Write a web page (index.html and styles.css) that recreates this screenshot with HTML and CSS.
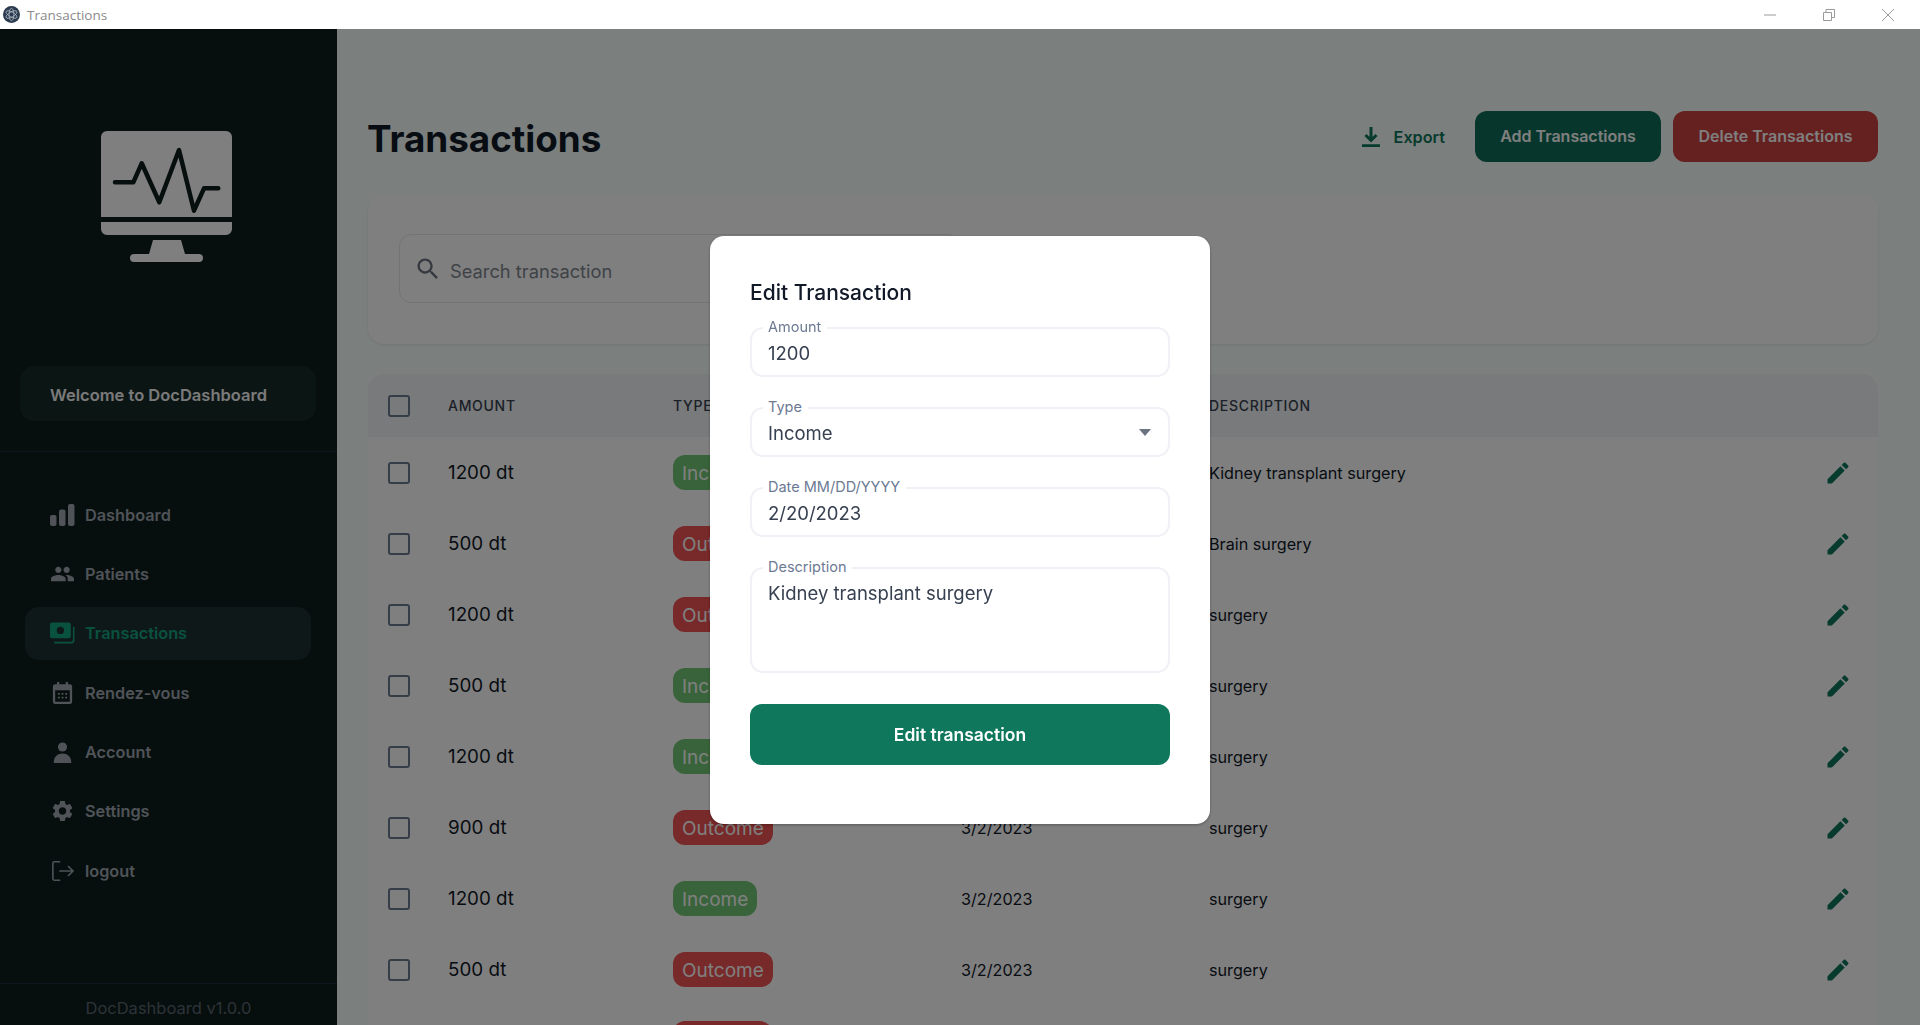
FILE: index.html
```html
<!DOCTYPE html>
<html lang="en">
<head>
  <meta charset="UTF-8">
  <title>Transactions</title>
  <link rel="stylesheet" href="styles.css">
</head>
<body>

<svg class="sprites" width="0" height="0">
  <symbol id="pencil" viewBox="0 0 24 24"><path d="M3 17.25V21h3.75L17.81 9.94l-3.75-3.75L3 17.25zM20.71 7.04c.39-.39.39-1.02 0-1.41l-2.34-2.34c-.39-.39-1.02-.39-1.41 0l-1.83 1.83 3.75 3.75 1.83-1.83z"/></symbol>
</svg>

<div class="titlebar">
  <div class="titlebar-left">
    <svg class="app-icon" viewBox="0 0 18 18">
      <circle cx="9" cy="9" r="9" fill="#2b3a4e"/>
      <g fill="none" stroke="#a9b4c0" stroke-width="0.9">
        <ellipse cx="9" cy="9" rx="6.5" ry="2.6" transform="rotate(30 9 9)"/>
        <ellipse cx="9" cy="9" rx="6.5" ry="2.6" transform="rotate(90 9 9)"/>
        <ellipse cx="9" cy="9" rx="6.5" ry="2.6" transform="rotate(150 9 9)"/>
      </g>
    </svg>
    <span>Transactions</span>
  </div>
  <div class="window-controls">
    <svg viewBox="0 0 12 12"><path d="M0 6h12"/></svg>
    <svg viewBox="0 0 12 12"><path d="M.5 3.5h8v8h-8zM3 3.5V.5h8.500v8h-3"/></svg>
    <svg viewBox="0 0 12 12"><path d="M0 0l12 12M12 0L0 12"/></svg>
  </div>
</div>

<div class="app">
  <aside class="sidebar">
    <div class="logo">
      <svg viewBox="0 0 131 131" width="131" height="131">
        <path fill="#fff" d="M6 0h119a6 6 0 0 1 6 6v80H0V6a6 6 0 0 1 6-6zM0 91h131v7a6 6 0 0 1-6 6H6a6 6 0 0 1-6-6zM52 109h28l4 14h14a3.500 3.500 0 0 1 0 8H33a3.500 3.500 0 0 1 0-8h15z"/>
        <path fill="none" stroke="#0c1e1c" stroke-width="4.500" stroke-linecap="round" stroke-linejoin="round" d="M14 51.300h18.300l8.400-19 17.600 39L78 19l15 60.700 10-22.400h14.300"/>
      </svg>
    </div>
    <div class="welcome">Welcome to DocDashboard</div>
    <nav class="side-nav">
      <a class="nav-item">
        <svg viewBox="0 0 25 22"><rect x="0" y="11" width="6.500" height="11" rx="2"/><rect x="9" y="5.500" width="6.500" height="16.500" rx="2"/><rect x="18" y="0" width="6.500" height="22" rx="2"/></svg>
        Dashboard
      </a>
      <a class="nav-item">
        <svg viewBox="0 0 24 24" class="wide"><path d="M16 11c1.660 0 2.990-1.340 2.990-3S17.660 5 16 5c-1.660 0-3 1.340-3 3s1.340 3 3 3zm-8 0c1.660 0 2.990-1.340 2.990-3S9.660 5 8 5C6.340 5 5 6.340 5 8s1.340 3 3 3zm0 2c-2.330 0-7 1.170-7 3.500V19h14v-2.500c0-2.330-4.670-3.500-7-3.500zm8 0c-.29 0-.62.02-.97.05 1.160.84 1.970 1.970 1.970 3.450V19h6v-2.500c0-2.330-4.670-3.500-7-3.500z"/></svg>
        Patients
      </a>
      <a class="nav-item active">
        <svg viewBox="0 0 24 20"><path fill-rule="evenodd" d="M2 0h16a2 2 0 0 1 2 2v11a2 2 0 0 1-2 2H2a2 2 0 0 1-2-2V2a2 2 0 0 1 2-2zm8 4a3.500 3.500 0 1 0 0 7 3.500 3.500 0 0 0 0-7z"/><path d="M22 4h1.500v13a3 3 0 0 1-3 3H4v-1.700h16.500a1.500 1.500 0 0 0 1.500-1.500z"/></svg>
        Transactions
      </a>
      <a class="nav-item">
        <svg viewBox="0 0 24 24"><path fill-rule="evenodd" d="M6 0h2.500v2.500h7V0H18v2.500h2a2.500 2.500 0 0 1 2.500 2.500v16.500A2.500 2.500 0 0 1 20 24H4a2.500 2.500 0 0 1-2.500-2.500V5A2.500 2.500 0 0 1 4 2.500h2zM4 9v12.500h16V9z"/><path d="M7 12h2v2H7zm4 0h2v2h-2zm4 0h2v2h-2zM7 16h2v2H7zm4 0h2v2h-2zm4 0h2v2h-2z"/></svg>
        Rendez-vous
      </a>
      <a class="nav-item">
        <svg viewBox="0 0 24 24"><circle cx="12" cy="6.500" r="5"/><path d="M2.500 24v-1.500C2.500 17 7 13.500 12 13.500s9.500 3.500 9.500 9V24z"/></svg>
        Account
      </a>
      <a class="nav-item">
        <svg viewBox="0 0 24 24" class="wide"><path fill-rule="evenodd" d="M19.140 12.940c.04-.3.06-.61.06-.94 0-.32-.02-.64-.07-.94l2.030-1.580c.18-.14.23-.41.12-.61l-1.920-3.320c-.12-.22-.37-.29-.59-.22l-2.390.96c-.5-.38-1.030-.7-1.620-.94l-.36-2.540c-.04-.24-.24-.41-.48-.41h-3.840c-.24 0-.43.17-.47.41l-.36 2.540c-.59.24-1.130.57-1.620.94l-2.390-.96c-.22-.08-.47 0-.59.22L2.740 8.870c-.12.21-.08.47.12.61l2.030 1.580c-.05.3-.09.63-.09.94s.02.64.07.94l-2.030 1.580c-.18.14-.23.41-.12.61l1.920 3.320c.12.22.37.29.59.22l2.390-.96c.5.38 1.030.7 1.620.94l.36 2.540c.05.24.24.41.48.41h3.840c.24 0 .44-.17.47-.41l.36-2.540c.59-.24 1.130-.56 1.620-.94l2.390.96c.22.08.47 0 .59-.22l1.920-3.320c.12-.22.07-.47-.12-.61l-2.010-1.580zM12 15.600c-1.980 0-3.600-1.620-3.600-3.600s1.620-3.600 3.600-3.600 3.600 1.620 3.600 3.600-1.620 3.600-3.600 3.600z"/></svg>
        Settings
      </a>
      <a class="nav-item">
        <svg viewBox="0 0 24 24" class="line"><path d="M9.500 2H3a1.500 1.500 0 0 0-1.500 1.500v17A1.500 1.500 0 0 0 3 22h6.500M8.500 12h15M18 6.500l5.500 5.500-5.500 5.500"/></svg>
        logout
      </a>
    </nav>
    <div class="version">DocDashboard v1.0.0</div>
  </aside>

  <main class="content">
    <header class="page-head">
      <h1>Transactions</h1>
      <div class="page-actions">
        <a class="export">
          <svg viewBox="0 0 18 20"><path d="M9 0v13M3.500 8L9 13.500 14.500 8M0 18.800h18"/></svg>
          Export
        </a>
        <button class="btn btn-add">Add Transactions</button>
        <button class="btn btn-delete">Delete Transactions</button>
      </div>
    </header>

    <section class="search-card">
      <div class="search-box">
        <svg viewBox="0 0 24 24"><path d="M15.500 14h-.79l-.28-.27C15.410 12.590 16 11.110 16 9.500 16 5.910 13.090 3 9.500 3S3 5.910 3 9.500 5.910 16 9.500 16c1.610 0 3.090-.59 4.230-1.570l.27.28v.79l5 4.990L20.490 19l-4.990-5zm-6 0C7.010 14 5 11.990 5 9.500S7.010 5 9.500 5 14 7.010 14 9.500 11.990 14 9.500 14z"/></svg>
        <span>Search transaction</span>
      </div>
    </section>

    <section class="table-card">
      <div class="row row-head">
        <span class="check"></span><span>Amount</span><span>Type</span><span>Date</span><span>Description</span><span></span>
      </div>
      <div class="row">
        <span class="check"></span><span class="amount">1200 dt</span><span><b class="badge income">Income</b></span><span>2/20/2023</span><span>Kidney transplant surgery</span><svg class="edit"><use href="#pencil"/></svg>
      </div>
      <div class="row">
        <span class="check"></span><span class="amount">500 dt</span><span><b class="badge outcome">Outcome</b></span><span>3/2/2023</span><span>Brain surgery</span><svg class="edit"><use href="#pencil"/></svg>
      </div>
      <div class="row">
        <span class="check"></span><span class="amount">1200 dt</span><span><b class="badge outcome">Outcome</b></span><span>3/2/2023</span><span>surgery</span><svg class="edit"><use href="#pencil"/></svg>
      </div>
      <div class="row">
        <span class="check"></span><span class="amount">500 dt</span><span><b class="badge income">Income</b></span><span>3/2/2023</span><span>surgery</span><svg class="edit"><use href="#pencil"/></svg>
      </div>
      <div class="row">
        <span class="check"></span><span class="amount">1200 dt</span><span><b class="badge income">Income</b></span><span>3/2/2023</span><span>surgery</span><svg class="edit"><use href="#pencil"/></svg>
      </div>
      <div class="row">
        <span class="check"></span><span class="amount">900 dt</span><span><b class="badge outcome">Outcome</b></span><span>3/2/2023</span><span>surgery</span><svg class="edit"><use href="#pencil"/></svg>
      </div>
      <div class="row">
        <span class="check"></span><span class="amount">1200 dt</span><span><b class="badge income">Income</b></span><span>3/2/2023</span><span>surgery</span><svg class="edit"><use href="#pencil"/></svg>
      </div>
      <div class="row">
        <span class="check"></span><span class="amount">500 dt</span><span><b class="badge outcome">Outcome</b></span><span>3/2/2023</span><span>surgery</span><svg class="edit"><use href="#pencil"/></svg>
      </div>
      <div class="row">
        <span></span><span></span><span><b class="badge outcome badge-empty"></b></span>
      </div>
    </section>
  </main>
</div>

<div class="backdrop">
  <form class="modal">
    <h2>Edit Transaction</h2>
    <div class="field">
      <label>Amount</label>
      <span>1200</span>
    </div>
    <div class="field">
      <label>Type</label>
      <span>Income</span>
      <i class="caret"></i>
    </div>
    <div class="field">
      <label>Date MM/DD/YYYY</label>
      <span>2/20/2023</span>
    </div>
    <div class="field field-area">
      <label>Description</label>
      <span>Kidney transplant surgery</span>
    </div>
    <button type="button" class="submit">Edit transaction</button>
  </form>
</div>

</body>
</html>
```

FILE: styles.css
```css
* {
  margin: 0;
  padding: 0;
  box-sizing: border-box;
}
html, body {
  height: 100%;
  overflow: hidden;
}
body {
  font-family: Inter, "Liberation Sans", sans-serif;
  background: #f6fefa;
  color: #111827;
}
.sprites {
  position: absolute;
}

/* window title bar */
.titlebar {
  height: 29px;
  background: #fff;
  display: flex;
  align-items: center;
  justify-content: space-between;
  padding: 0 26px 0 3px;
}
.titlebar-left {
  display: flex;
  align-items: center;
  gap: 7px;
  font-family: "Open Sans", sans-serif;
  font-size: 13.500px;
  color: #8a8a8a;
}
.app-icon {
  width: 17px;
  height: 17px;
}
.window-controls {
  display: flex;
  gap: 47px;
}
.window-controls svg {
  width: 12px;
  height: 12px;
  fill: none;
  stroke: #9a9a9a;
  stroke-width: 1;
}

.app {
  display: flex;
  height: 996px;
}

/* sidebar */
.sidebar {
  width: 337px;
  flex: none;
  background: #0c1e1c;
  display: flex;
  flex-direction: column;
  position: relative;
}
.logo {
  height: 337px;
  padding-top: 102px;
  display: flex;
  justify-content: center;
}
.logo svg {
  margin-left: -5px;
}
.welcome {
  margin: 0 21px 0 20px;
  height: 55px;
  line-height: 58px;
  padding-left: 30px;
  background: #162a28;
  border-radius: 14px;
  font-size: 16.500px;
  font-weight: 600;
  color: #f4f4f4;
  white-space: nowrap;
}
.side-nav {
  margin-top: 30px;
  padding: 36px 26px 0 25px;
  border-top: 1px solid #1e2c3c;
  display: flex;
  flex-direction: column;
  gap: 6.400px;
}
.nav-item {
  height: 53px;
  display: flex;
  align-items: center;
  gap: 10px;
  padding-left: 25px;
  border-radius: 14px;
  font-size: 16.300px;
  font-weight: 600;
  color: #a0a6b0;
}
.nav-item svg {
  width: 25px;
  height: 22px;
  fill: currentColor;
  flex: none;
}
.nav-item svg.wide {
  height: 26px;
}
.nav-item svg.line {
  fill: none;
  stroke: currentColor;
  stroke-width: 1.700;
}
.nav-item.active {
  background: #1e3033;
  color: #14a480;
}
.version {
  margin-top: auto;
  height: 42px;
  border-top: 1px solid #1e2c3c;
  text-align: center;
  line-height: 48px;
  font-size: 16.500px;
  color: #5c6570;
}

/* main area */
.content {
  flex: 1;
  padding: 82px 42px 0 31px;
  min-width: 0;
}
.page-head {
  display: flex;
  align-items: center;
  justify-content: space-between;
  height: 51px;
}
h1 {
  font-size: 36.800px;
  font-weight: 700;
  color: #111827;
  margin-top: 3px;
  margin-left: -1px;
}
.page-actions {
  display: flex;
  align-items: center;
}
.export {
  display: flex;
  align-items: center;
  gap: 14px;
  font-size: 16.200px;
  font-weight: 600;
  color: #0e775c;
  margin-right: 30px;
}
.export svg {
  width: 18px;
  height: 20px;
  fill: none;
  stroke: currentColor;
  stroke-width: 3;
}
.btn {
  height: 51px;
  border: none;
  border-radius: 12px;
  font-family: inherit;
  font-size: 16px;
  font-weight: 600;
  line-height: 49px;
  color: #fff;
}
.btn-add {
  width: 186px;
  background: #0e6e58;
}
.btn-delete {
  width: 205px;
  margin-left: 12px;
  background: #ca4040;
}

.search-card {
  margin-top: 32px;
  height: 150px;
  background: #fff;
  border-radius: 16px;
  padding: 40px 31px;
  box-shadow: 0 1px 2px rgba(100, 116, 139, 0.15);
}
.search-box {
  width: 560px;
  height: 69px;
  border: 1px solid #e5e7eb;
  border-radius: 12px;
  display: flex;
  align-items: center;
  gap: 8px;
  padding-left: 15px;
  font-size: 18.300px;
  color: #7f868f;
}
.search-box svg {
  width: 28px;
  height: 28px;
  fill: #6b7280;
  margin-left: -1px;
}
.search-box span {
  margin-top: 4px;
}

.table-card {
  margin-top: 30px;
  background: #fff;
  border-radius: 16px 16px 0 0;
  overflow: hidden;
}
.row {
  display: grid;
  grid-template-columns: 80px 225px 288px 248px 1fr 54px;
  align-items: center;
  height: 71px;
  font-size: 16.200px;
  color: #111827;
}
.row-head {
  height: 63px;
  background: #f3f4f6;
  font-size: 14px;
  font-weight: 500;
  letter-spacing: 0.7px;
  text-transform: uppercase;
  color: #374151;
}
.amount {
  font-size: 18.800px;
}
.check {
  width: 22px;
  height: 22px;
  margin-left: 20px;
  border: 2.500px solid #6b7a90;
  border-radius: 3px;
}
.badge {
  display: inline-block;
  height: 35px;
  line-height: 37px;
  padding: 0 9px;
  border-radius: 12px;
  font-weight: 400;
  font-size: 19px;
  color: #fff;
}
.badge-empty {
  width: 99px;
}
.income {
  background: #72c876;
}
.outcome {
  background: #f05252;
}
.edit {
  width: 28px;
  height: 28px;
  fill: #0e775c;
}

/* dialog */
.backdrop {
  position: fixed;
  top: 29px;
  left: 0;
  right: 0;
  bottom: 0;
  background: rgba(0, 0, 0, 0.5);
  display: flex;
  justify-content: center;
  align-items: flex-start;
  padding-top: 207px;
}
.modal {
  width: 500px;
  height: 588px;
  background: #fff;
  border-radius: 14px;
  padding: 40px;
  box-shadow: 0 1px 3px rgba(0, 0, 0, 0.3);
}
.modal h2 {
  font-size: 21px;
  font-weight: 500;
  line-height: 33px;
  height: 35px;
  margin-bottom: 16px;
  color: #111827;
}
.field {
  position: relative;
  height: 50px;
  margin-bottom: 30px;
  border: 2px solid #f0f0f6;
  border-radius: 13px;
  padding: 13px 16px 0;
  font-size: 18.500px;
  color: #374151;
}
.field label {
  position: absolute;
  top: -11px;
  left: 11px;
  padding: 0 6px 0 5px;
  background: #fff;
  font-size: 14.500px;
  line-height: 18px;
  color: #6c7a93;
}
.field-area {
  height: 106px;
  margin-bottom: 31px;
}
.caret {
  position: absolute;
  right: 17px;
  top: 20px;
  border-left: 6px solid transparent;
  border-right: 6px solid transparent;
  border-top: 7px solid #6b7280;
}
.submit {
  width: 100%;
  height: 61px;
  border: none;
  border-radius: 12px;
  background: #0e775c;
  color: #fff;
  font-family: inherit;
  font-size: 17.500px;
  font-weight: 600;
}
```
